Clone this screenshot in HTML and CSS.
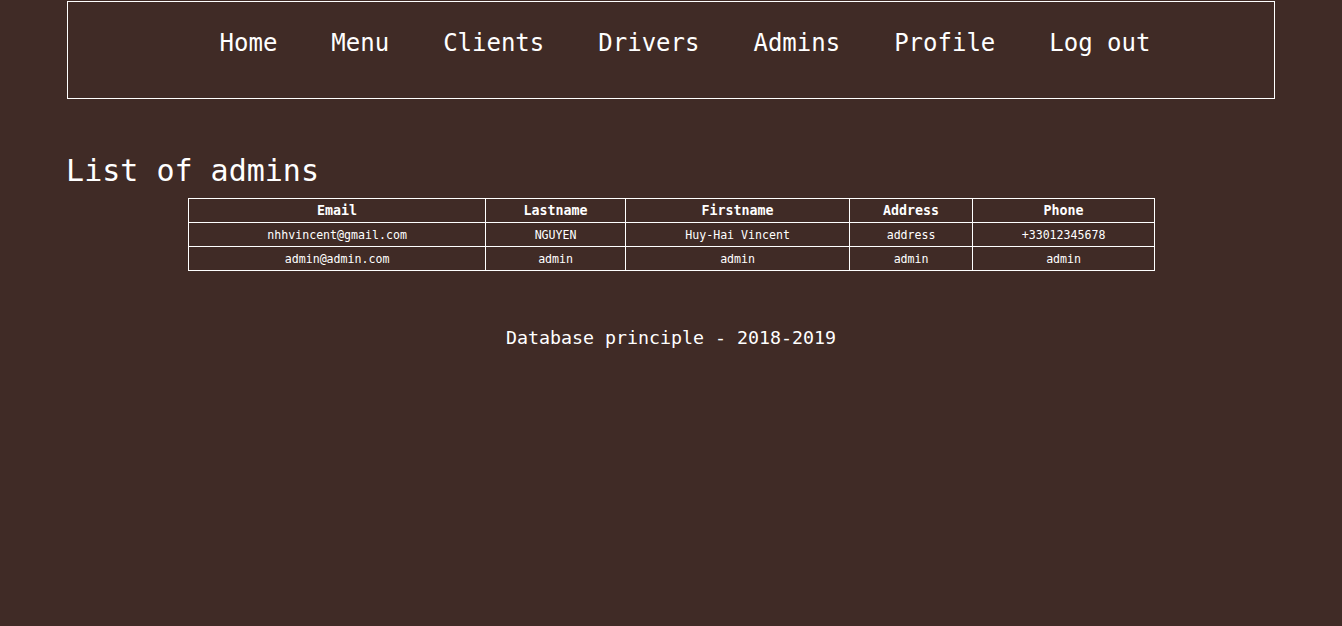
FILE: index.html
```html
<!DOCTYPE html>
<html lang="en">
<head>
<meta charset="utf-8">
<title>List of admins</title>
<link rel="stylesheet" href="styles.css">
</head>
<body>
<div class="page">
  <nav class="nav">
    <a class="nav-link" href="#">Home</a>
    <a class="nav-link" href="#">Menu</a>
    <a class="nav-link" href="#">Clients</a>
    <a class="nav-link" href="#">Drivers</a>
    <a class="nav-link" href="#">Admins</a>
    <a class="nav-link" href="#">Profile</a>
    <a class="nav-link" href="#">Log out</a>
  </nav>
  <h1 class="title">List of admins</h1>
  <table class="admins">
    <colgroup>
      <col class="c-email">
      <col class="c-last">
      <col class="c-first">
      <col class="c-addr">
      <col class="c-phone">
    </colgroup>
    <thead>
      <tr><th>Email</th><th>Lastname</th><th>Firstname</th><th>Address</th><th>Phone</th></tr>
    </thead>
    <tbody>
      <tr><td>nhhvincent@gmail.com</td><td>NGUYEN</td><td>Huy-Hai Vincent</td><td>address</td><td>+33012345678</td></tr>
      <tr><td>admin@admin.com</td><td>admin</td><td>admin</td><td>admin</td><td>admin</td></tr>
    </tbody>
  </table>
  <p class="footer">Database principle - 2018-2019</p>
</div>
</body>
</html>
```
FILE: styles.css
```css
html, body {
  margin: 0;
  padding: 0;
  background: #402b26;
  color: #ffffff;
  font-family: "DejaVu Sans Mono", "Liberation Mono", monospace;
}
.page {
  width: 90%;
  margin: 0 auto;
  padding-top: 1px;
}
.nav {
  display: flex;
  justify-content: center;
  gap: 54px;
  border: 1px solid #ffffff;
  padding: 27px 0 41px 28px;
}
.nav-link {
  color: #ffffff;
  text-decoration: none;
  font-size: 24px;
  line-height: 28px;
}
.title {
  margin: 54px 0 9px -1px;
  font-size: 30px;
  line-height: 36px;
  font-weight: normal;
}
.admins {
  width: 966px;
  margin: 0 0 0 121px;
  border-collapse: collapse;
  table-layout: fixed;
}
.c-email { width: 297px; }
.c-last { width: 140px; }
.c-first { width: 224px; }
.c-addr { width: 123px; }
.c-phone { width: 182px; }
.admins th,
.admins td {
  border: 1px solid #ffffff;
  text-align: center;
  height: 24px;
  padding: 0;
  box-sizing: border-box;
}
.admins th {
  font-size: 13.3px;
  font-weight: bold;
}
.admins td {
  font-size: 11.6px;
}
.footer {
  margin: 56px 0 0 0;
  text-align: center;
  font-size: 18.3px;
  line-height: 22px;
}
```
